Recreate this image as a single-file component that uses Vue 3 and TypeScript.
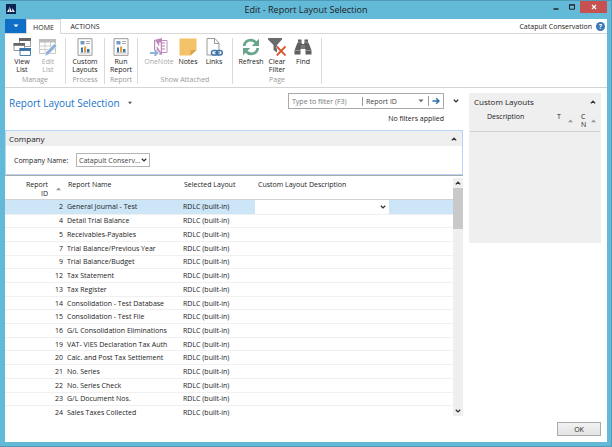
<script setup lang="ts">
import { ref } from 'vue'

interface ReportRow {
  id: number
  name: string
  layout: string
}

interface RibbonAction {
  icon: string
  lines: string[]
  width: string
  disabled?: boolean
}

interface RibbonGroup {
  label: string
  size: string
  actions: RibbonAction[]
}

const groups: RibbonGroup[] = [
  {
    label: 'Manage',
    size: 'medium',
    actions: [
      { icon: 'view', lines: ['View', 'List'], width: 'm' },
      { icon: 'edit', lines: ['Edit', 'List'], width: 'm', disabled: true },
    ],
  },
  { label: 'Process', size: 'small', actions: [{ icon: 'report', lines: ['Custom', 'Layouts'], width: 'l' }] },
  { label: 'Report', size: 'small', actions: [{ icon: 'report', lines: ['Run', 'Report'], width: 'm' }] },
  {
    label: 'Show Attached',
    size: 'large',
    actions: [
      { icon: 'onenote', lines: ['OneNote'], width: 'l', disabled: true },
      { icon: 'notes', lines: ['Notes'], width: 'm' },
      { icon: 'links', lines: ['Links'], width: 'm' },
    ],
  },
  {
    label: 'Page',
    size: 'large',
    actions: [
      { icon: 'refresh', lines: ['Refresh'], width: 'm' },
      { icon: 'filter', lines: ['Clear', 'Filter'], width: 'm' },
      { icon: 'find', lines: ['Find'], width: 'm' },
    ],
  },
]

const names: [number, string][] = [
  [2, 'General Journal - Test'],
  [4, 'Detail Trial Balance'],
  [5, 'Receivables-Payables'],
  [7, 'Trial Balance/Previous Year'],
  [9, 'Trial Balance/Budget'],
  [12, 'Tax Statement'],
  [13, 'Tax Register'],
  [14, 'Consolidation - Test Database'],
  [15, 'Consolidation - Test File'],
  [16, 'G/L Consolidation Eliminations'],
  [19, 'VAT- VIES Declaration Tax Auth'],
  [20, 'Calc. and Post Tax Settlement'],
  [21, 'No. Series'],
  [22, 'No. Series Check'],
  [23, 'G/L Document Nos.'],
  [24, 'Sales Taxes Collected'],
]
const rows: ReportRow[] = names.map(([id, name]) => ({ id, name, layout: 'RDLC (built-in)' }))

const selectedId = ref(2)
const filterText = ref('')
</script>

<template>
  <div class="window">
    <svg class="sprite" aria-hidden="true">
      <symbol id="i-up" viewBox="0 0 6 6"><path d="M.8 4.400 3 2.200l2.200 2.200" fill="none" stroke="#333" stroke-width="1.300" /></symbol>
      <symbol id="i-down" viewBox="0 0 6 6"><path d="M.8 1.700 3 3.900l2.200-2.200" fill="none" stroke="#333" stroke-width="1.300" /></symbol>
      <symbol id="i-sort" viewBox="0 0 6 4"><path d="M3 .3 6 3.400H0z" fill="#999" /></symbol>
      <symbol id="i-view" viewBox="0 0 18 18">
        <path d="M6.500.5h11v8h-11z" fill="#fff" stroke="#999" /><path d="M6 0h12v3H6z" fill="#666" />
        <path d="M1 5.500h10.500v7H1z" fill="#fff" stroke="#999" /><path d="M.5 5H12v2.800H.5z" fill="#666" />
        <path d="M7 10.500h10.500v7H7z" fill="#fff" stroke="#4d7fb0" /><path d="M6.500 10H18v3H6.500z" fill="#3d75aa" />
      </symbol>
      <symbol id="i-edit" viewBox="0 0 18 18">
        <path d="M.5 1.500h16v14H.5z" fill="#fff" stroke="#c6c6c6" /><path d="M0 1h17v3.500H0z" fill="#bdbdbd" />
        <path d="M.5 8h16M.5 11.500h16M6 4v12M11.500 4v12" stroke="#cecece" />
        <path d="m5.800 18 1-3.800L15.500 5.500l2.500 2.500-8.500 8.800z" fill="#8fb2d6" stroke="#fff" stroke-width=".6" />
      </symbol>
      <symbol id="i-report" viewBox="0 0 18 18">
        <path d="M2 .7h14v16.600H2z" fill="#fff" stroke="#9a9a9a" stroke-width="1" />
        <path d="M4.500 3h4v3.500h-4z" fill="#6f9cc6" /><path d="M10 3.500h4M10 5.500h4" stroke="#aaa" />
        <path d="M5 9.500h2v5H5zM11 11h2.500v3.500H11z" fill="#3d75aa" /><path d="M8 8.500h2.200v6H8z" fill="#e0a13b" />
        <path d="M4 15h10.500" stroke="#aaa" stroke-width=".7" />
      </symbol>
      <symbol id="i-onenote" viewBox="0 0 18 18">
        <path d="M11 2.500h6v12h-6" fill="#fff" stroke="#c08dbd" /><path d="M12 5h3M12 8h3M12 11h3" stroke="#b87fb5" stroke-width="1.200" />
        <path d="m4 2 8-2v17l-8-2z" fill="#bd88bb" /><path d="M6 11.500V5l4 6.500V4.500" fill="none" stroke="#fff" stroke-width="1.500" />
        <path d="M0 15h7M4.500 12l3 3-3 3" fill="none" stroke="#fff" stroke-width="3.400" />
        <path d="M0 15h7M4.500 12l3 3-3 3" fill="none" stroke="#8fb2d6" stroke-width="1.800" />
      </symbol>
      <symbol id="i-notes" viewBox="0 0 18 18">
        <path d="M.5.5h17v11.500l-6 5.500H.5z" fill="#f4c268" /><path d="M11.500 17.500V12h6z" fill="#d9a548" />
      </symbol>
      <symbol id="i-links" viewBox="0 0 18 18">
        <path d="M2 .5h8l4 4.500v12H2z" fill="#fff" stroke="#9a9a9a" /><path d="M9.500.5v5H14" fill="none" stroke="#9a9a9a" />
        <rect x="6.500" y="12.500" width="6" height="4.500" rx="2.200" fill="#fff" stroke="#3d75aa" stroke-width="1.500" />
        <rect x="11.300" y="12.500" width="6" height="4.500" rx="2.200" fill="none" stroke="#3d75aa" stroke-width="1.500" />
        <path d="M9.500 14.800h5" stroke="#3d75aa" stroke-width="1.200" />
      </symbol>
      <symbol id="i-refresh" viewBox="0 0 18 18">
        <path d="M2.200 8C2.500 4 5.500 2.200 8.700 2.200c2.300 0 4 .9 5.200 2.300M15.800 10c-.3 4-3.300 5.800-6.500 5.800-2.300 0-4-.9-5.200-2.300" fill="none" stroke="#68a68a" stroke-width="2.800" />
        <path d="M17 .8V8H9.800zM1 17.200V10h7.200z" fill="#68a68a" />
      </symbol>
      <symbol id="i-filter" viewBox="0 0 18 18">
        <path d="M0 0h14v1.500L9 7v7.500l-3.500-2.500V7L0 1.500z" fill="#6b6b6b" />
        <path d="m8.800 8.500 8.700 9M17.500 8.500l-8.700 9" stroke="#fff" stroke-width="3" /><path d="m8.800 8.500 8.700 9M17.500 8.500l-8.700 9" stroke="#d9532c" stroke-width="1.800" />
      </symbol>
      <symbol id="i-find" viewBox="0 0 18 18">
        <path d="M4 1.500h3.500V4L8 6h2l.5-2V1.500H14V4l1.500 3 2 5.500v4h-6V11H6.500v5.500h-6v-4l2-5.500L4 4z" fill="#5f5f5f" />
        <path d="M4 4.200h3.500M10.500 4.200H14M1 12.500h5.500M11.500 12.500h5.500M8 7v4M10 7v4" stroke="#aaa" stroke-width=".7" />
      </symbol>
    </svg>

    <header class="titlebar">
      <svg class="logo" viewBox="0 0 10 10"><path d="M0 0h10v10H0z" fill="#0b2553" /><path d="m1 8 2-3.500V8zM3.500 8V2.500L6 8zM6.300 8V4l2.500 4z" fill="#fff" /></svg>
      <h1>Edit - Report Layout Selection</h1>
      <div class="controls">
        <button aria-label="Minimize"><svg viewBox="0 0 8 8"><path d="M1.500 6h5" stroke="#222" stroke-width="1.500" /></svg></button>
        <button aria-label="Maximize"><svg viewBox="0 0 8 8"><path d="M1.500 2h5v4.200h-5z" fill="none" stroke="#222" /><path d="M1 1.800h6" stroke="#222" /></svg></button>
        <button class="close" aria-label="Close"><svg viewBox="0 0 8 8"><path d="m2 2 4 4M6 2 2 6" stroke="#fff" stroke-width="1.200" /></svg></button>
      </div>
    </header>

    <div class="client">
      <nav class="tabs">
        <button class="file" aria-label="Application menu"><svg viewBox="0 0 6 4"><path d="M.5.5h5L3 3.200z" fill="#fff" /></svg></button>
        <button class="tab active">HOME</button>
        <button class="tab">ACTIONS</button>
        <span class="company-name">Catapult Conservation</span>
        <button class="help" aria-label="Help">?</button>
      </nav>

      <section class="ribbon">
        <div v-for="group in groups" :key="group.label" class="group" :class="group.size">
          <div class="actions">
            <button v-for="action in group.actions" :key="action.lines[0]" class="action" :class="action.width" :disabled="action.disabled">
              <svg><use :href="'#i-' + action.icon" /></svg>
              <span v-for="line in action.lines" :key="line">{{ line }}</span>
            </button>
          </div>
          <div class="group-label">{{ group.label }}</div>
        </div>
      </section>

      <div class="body">
        <main class="main">
          <div class="page-head">
            <h2>Report Layout Selection</h2>
            <button class="page-menu" aria-label="Page menu"><svg viewBox="0 0 6 4"><path d="M1 .8h4L3 3.200z" fill="#555" /></svg></button>
            <div class="filter">
              <div class="filter-box">
                <input v-model="filterText" type="text" placeholder="Type to filter (F3)" aria-label="Filter" />
                <div class="picker field">
                  <select aria-label="Filter field"><option>Report ID</option></select>
                  <svg viewBox="0 0 6 4"><path d="M.5.5h5L3 3.200z" fill="#666" /></svg>
                </div>
                <button aria-label="Apply filter"><svg viewBox="0 0 8 8"><path d="M.5 4h6.300M4.200 1.200 7 4 4.200 6.800" fill="none" stroke="#2f6fae" stroke-width="1.400" /></svg></button>
              </div>
              <span>No filters applied</span>
            </div>
            <button class="expand" aria-label="Expand filters"><svg><use href="#i-down" /></svg></button>
          </div>

          <section class="company">
            <div class="bar">
              <h3>Company</h3>
              <button aria-label="Collapse company"><svg><use href="#i-up" /></svg></button>
            </div>
            <div class="form">
              <label for="company-select">Company Name:</label>
              <div class="picker boxed">
                <select id="company-select"><option>Catapult Conserv...</option></select>
                <svg><use href="#i-down" /></svg>
              </div>
            </div>
          </section>

          <div class="list">
            <div class="viewport">
              <table>
                <colgroup><col class="c-id" /><col class="c-name" /><col class="c-layout" /><col class="c-custom" /><col /></colgroup>
                <thead>
                  <tr>
                    <th class="id"><div><span>Report<br />ID</span><svg><use href="#i-sort" /></svg></div></th>
                    <th>Report Name</th>
                    <th>Selected Layout</th>
                    <th class="custom">Custom Layout Description</th>
                    <th></th>
                  </tr>
                </thead>
                <tbody>
                  <tr v-for="row in rows" :key="row.id" :class="{ selected: row.id === selectedId }" @click="selectedId = row.id">
                    <td class="id">{{ row.id }}</td>
                    <td>{{ row.name }}</td>
                    <td>{{ row.layout }}</td>
                    <td class="lookup"><button v-if="row.id === selectedId" aria-label="Choose custom layout"><svg><use href="#i-down" /></svg></button></td>
                    <td></td>
                  </tr>
                </tbody>
              </table>
            </div>
            <div class="scrollbar">
              <button aria-label="Scroll up"><svg><use href="#i-up" /></svg></button>
              <div class="track"><div class="thumb"></div></div>
              <button aria-label="Scroll down"><svg><use href="#i-down" /></svg></button>
            </div>
          </div>
        </main>

        <aside class="factbox">
          <div class="bar">
            <h3>Custom Layouts</h3>
            <button aria-label="Collapse custom layouts"><svg><use href="#i-up" /></svg></button>
          </div>
          <div class="fact-head">
            <span class="desc">Description</span>
            <span>T</span><svg><use href="#i-sort" /></svg>
            <span>C<br />N</span><svg><use href="#i-sort" /></svg>
          </div>
        </aside>
      </div>

      <footer><button>OK</button></footer>
    </div>
  </div>
</template>

<style>
body {
  overflow: hidden;
}
</style>

<style scoped>
* {
  box-sizing: border-box;
}
.window {
  height: 100vh;
  display: flex;
  flex-direction: column;
  padding: 0 4px 4px 5px;
  background: #62b9d8;
  border: 1px solid #4f9ab6;
  border-width: 1px 1px 1px 0;
  font: 7px/9px "Open Sans", "Noto Sans", sans-serif;
  color: #222;
}
.sprite {
  position: absolute;
  width: 0;
  height: 0;
}
button,
input,
select {
  font: inherit;
  color: inherit;
  margin: 0;
  padding: 0;
  border: 0;
  background: none;
  border-radius: 0;
}
button {
  display: flex;
  align-items: center;
  justify-content: center;
}
svg {
  width: 6px;
  height: 6px;
  display: block;
  flex: none;
}
h1,
h2,
h3 {
  margin: 0;
  font-weight: 400;
}
.titlebar {
  height: 18px;
  flex: none;
  display: grid;
  grid-template-columns: 1fr auto 1fr;
}
.logo {
  width: 10px;
  height: 10px;
  margin: 3px 0 0 1px;
}
h1 {
  font-size: 9px;
  line-height: 17px;
}
.controls {
  display: flex;
  justify-content: flex-end;
}
.controls button {
  width: 16px;
  height: 12px;
}
.controls svg {
  width: 8px;
  height: 8px;
}
.controls .close {
  width: 27px;
  background: #c75050;
}
.client {
  flex: 1;
  min-height: 0;
  display: flex;
  flex-direction: column;
  background: #fff;
}
.tabs {
  height: 15px;
  flex: none;
  display: flex;
  align-items: stretch;
  box-shadow: inset 0 -1px #d8d8d8;
}
.file {
  width: 21px;
  background: #0f6fc6;
  height: 14px;
}
.file svg,
.page-menu svg,
.field svg {
  height: 4px;
}
.tab {
  width: 48px;
}
.tab.active {
  width: 35px;
  background: #fff;
  border: 1px solid #d8d8d8;
  border-width: 1px 1px 0;
}
.company-name {
  margin-left: auto;
  line-height: 16px;
}
.help {
  width: 9px;
  height: 9px;
  margin: 3px 2px 0 4px;
  border-radius: 50%;
  background: #3a77b5;
  color: #fff;
  font-weight: 700;
}
.ribbon {
  height: 54px;
  flex: none;
  display: flex;
  padding: 4px 0 3px;
  border-bottom: 1px solid #d4d4d4;
}
.group {
  display: flex;
  flex-direction: column;
  border-right: 1px solid #d9d9d9;
}
.group.small {
  padding: 0 3px;
}
.group.medium {
  padding: 0 4px;
}
.group.large {
  padding: 0 5px;
}
.actions {
  flex: 1;
  display: flex;
}
.action {
  width: 26px;
  flex-direction: column;
  justify-content: flex-start;
  line-height: 8px;
}
.action.l {
  width: 32px;
}
.action svg {
  width: 18px;
  height: 18px;
  margin-bottom: 2px;
}
.action:disabled {
  color: #a8a8a8;
}
.group-label {
  text-align: center;
  color: #999;
  line-height: 8px;
}
.body {
  flex: 1;
  min-height: 0;
  display: flex;
  gap: 6px;
  padding-right: 6px;
}
.main {
  flex: 1;
  min-width: 0;
  display: flex;
  flex-direction: column;
}
.page-head {
  height: 42px;
  flex: none;
  display: flex;
  align-items: flex-start;
  padding: 5px 4px 0;
}
h2 {
  font-size: 10px;
  line-height: 20px;
  color: #1873c8;
}
.page-menu {
  height: 20px;
  margin-left: 7px;
}
.filter {
  width: 156px;
  margin-left: auto;
  display: flex;
  flex-direction: column;
  align-items: flex-end;
  gap: 5px;
}
.filter-box {
  width: 100%;
  height: 16px;
  display: flex;
  align-items: center;
  border: 1px solid #aaa;
}
.filter-box input {
  flex: 1;
  min-width: 0;
  padding-left: 3px;
  outline: 0;
}
.filter-box input::placeholder {
  color: #777;
}
.picker {
  display: flex;
  align-items: center;
}
.picker select {
  flex: 1;
  min-width: 0;
  appearance: none;
  color: #444;
  outline: 0;
}
.field {
  width: 66px;
  padding: 0 4px 0 3px;
  border-left: 1px solid #999;
}
.filter-box button {
  width: 15px;
  height: 10px;
  border-left: 1px solid #999;
}
.filter-box button svg {
  width: 8px;
  height: 8px;
}
.expand {
  height: 16px;
  margin-left: 9px;
}
.company {
  flex: none;
  border: 1px solid #b9d5f5;
}
.bar {
  height: 15px;
  display: flex;
  align-items: center;
  justify-content: space-between;
  padding: 0 5px 0 3px;
  background: #efefef;
}
.bar h3 {
  font-size: 8px;
  line-height: 15px;
}
.form {
  height: 28px;
  display: flex;
  align-items: center;
  gap: 8px;
  padding-left: 8px;
}
.form label {
  width: 54px;
  white-space: nowrap;
}
.boxed {
  width: 74px;
  height: 14px;
  padding: 0 2px;
  border: 1px solid #b5b5b5;
}
.list {
  flex: 1;
  min-height: 0;
  display: flex;
  border-top: 1px solid #aaa;
}
.viewport {
  flex: 1;
  min-width: 0;
  overflow: hidden;
}
table {
  width: 100%;
  height: calc(100% + 4px);
  table-layout: fixed;
  border-collapse: collapse;
}
.c-id {
  width: 60px;
}
.c-name {
  width: 116px;
}
.c-layout {
  width: 74px;
}
.c-custom {
  width: 134px;
}
th,
td {
  padding: 0 0 0 2px;
  text-align: left;
  font-weight: 400;
  white-space: nowrap;
}
thead tr {
  height: 23px;
}
th {
  padding: 4px 0 0 3px;
  vertical-align: top;
  border-bottom: 1px solid #d2d2d2;
}
th.id div {
  display: flex;
  justify-content: flex-end;
  align-items: center;
  gap: 8px;
  text-align: right;
}
th.id svg,
.fact-head svg {
  width: 5px;
  height: 4px;
}
th.id {
  padding-right: 4px;
}
td.id {
  text-align: right;
  padding-right: 2px;
}
tbody tr {
  border-bottom: 1px solid #f0f0f0;
}
.selected {
  background: #cce5f7;
}
.selected .lookup {
  background: #fff;
}
.lookup button {
  width: 12px;
  height: 10px;
  margin-left: auto;
}
.scrollbar {
  width: 10px;
  flex: none;
  margin-top: 2px;
  display: flex;
  flex-direction: column;
  background: #efefef;
}
.scrollbar button {
  height: 10px;
}
.track {
  flex: 1;
}
.thumb {
  height: 19%;
  background: #c9c9c9;
}
.factbox {
  width: 132px;
  height: 150px;
  flex: none;
  margin-top: 5px;
  background: #efefef;
}
.factbox .bar {
  height: 17px;
  padding-left: 5px;
}
.fact-head {
  height: 22px;
  display: grid;
  grid-template-columns: 70px 11px 13px 10px 6px;
  padding: 3px 0 0 17px;
  line-height: 8px;
  margin: 0 1px;
  border-bottom: 1px solid #d0d0d0;
}
.fact-head svg {
  margin-top: 6px;
}
footer {
  height: 26px;
  flex: none;
  display: flex;
  justify-content: flex-end;
  align-items: flex-start;
  padding: 6px 6px 0 0;
}
footer button {
  width: 44px;
  height: 14px;
  border: 1px solid #aaa;
  background: linear-gradient(#f2f2f2, #e3e3e3);
}
</style>
